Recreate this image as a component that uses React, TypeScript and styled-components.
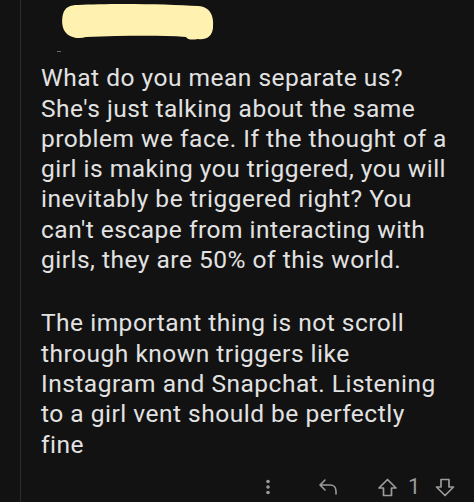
import React from "react";
import styled, { createGlobalStyle } from "styled-components";

const GlobalStyle = createGlobalStyle`
  html, body {
    margin: 0;
    padding: 0;
    background: #121212;
  }
`;

const Page = styled.div`
  display: flex;
  width: 474px;
  height: 502px;
  background: #121212;
  overflow: hidden;
`;

const ThreadLine = styled.div`
  width: 20px;
  flex: none;
  border-right: 1px solid #2c2c2c;
`;

const Comment = styled.div`
  flex: 1;
  display: flex;
  flex-direction: column;
  padding-left: 20px;
`;

const Header = styled.div`
  position: relative;
  height: 65px;
`;

const Redaction = styled.svg`
  position: absolute;
  left: 19px;
  top: 2px;
`;

const Dash = styled.span`
  position: absolute;
  left: 16px;
  top: 51px;
  width: 4px;
  height: 1px;
  background: #6a6a6a;
`;

const Body = styled.div`
  font-family: Roboto, "Liberation Sans", sans-serif;
  font-size: 24.5px;
  letter-spacing: 0.5px;
  line-height: 30.3px;
  color: #e2e2e2;
  white-space: nowrap;
`;

const Paragraph = styled.p`
  margin: 0;
  & + & {
    margin-top: 33px;
  }
`;

const Footer = styled.div`
  display: flex;
  align-items: center;
  height: 30px;
  margin-top: 13px;
  color: #9b9b9b;
  font-family: Roboto, "Liberation Sans", sans-serif;
`;

const Action = styled.span<{ $left: number }>`
  display: flex;
  align-items: center;
  margin-left: ${(p) => p.$left}px;
`;

const Score = styled.span`
  font-size: 22px;
  line-height: 1;
  margin-left: 10px;
  margin-right: 15px;
`;

const first = [
  "What do you mean separate us?",
  "She's just talking about the same",
  "problem we face. If the thought of a",
  "girl is making you triggered, you will",
  "inevitably be triggered right? You",
  "can't escape from interacting with",
  "girls, they are 50% of this world.",
];

const second = [
  "The important thing is not scroll",
  "through known triggers like",
  "Instagram and Snapchat. Listening",
  "to a girl vent should be perfectly",
  "fine",
];

const Lines = ({ lines }: { lines: string[] }) => (
  <Paragraph>
    {lines.map((l, i) => (
      <React.Fragment key={i}>
        {l}
        {i < lines.length - 1 && <br />}
      </React.Fragment>
    ))}
  </Paragraph>
);

const App = () => {
  return (
    <>
      <GlobalStyle />
      <Page>
        <ThreadLine />
        <Comment>
          <Header>
            <Redaction width="156" height="40" viewBox="0 0 156 40">
              <path
                d="M18 3 C 50 1, 110 2, 138 4 C 152 5, 154 16, 153 26 C 152 35, 146 38, 138 37 C 132 38, 128 38, 126 35 C 96 33, 60 34, 26 35 C 20 37, 14 36, 10 34 C 2 30, 1 20, 3 12 C 5 5, 10 3, 18 3 Z"
                fill="#fff2b0"
              />
            </Redaction>
            <Dash />
          </Header>
          <Body>
            <Lines lines={first} />
            <Lines lines={second} />
          </Body>
          <Footer>
            <Action $left={224}>
              <svg width="6" height="16" viewBox="0 0 6 16">
                <circle cx="3" cy="2.5" r="1.8" fill="#9b9b9b" />
                <circle cx="3" cy="8" r="1.8" fill="#9b9b9b" />
                <circle cx="3" cy="13.5" r="1.8" fill="#9b9b9b" />
              </svg>
            </Action>
            <Action $left={47}>
              <svg width="20" height="18" viewBox="0 0 20 18" fill="none">
                <path
                  d="M7 2 L2 7 L7 12 M2 7 H12 C16 7 18 10 18 13 V16"
                  stroke="#9b9b9b"
                  strokeWidth="1.6"
                  strokeLinecap="round"
                  strokeLinejoin="round"
                />
              </svg>
            </Action>
            <Action $left={39}>
              <svg width="21" height="19" viewBox="0 0 21 19" fill="none">
                <path
                  d="M10.5 1.5 L19 10 H14.5 V17.5 H6.5 V10 H2 Z"
                  stroke="#9b9b9b"
                  strokeWidth="1.7"
                  strokeLinejoin="round"
                />
              </svg>
            </Action>
            <Score>1</Score>
            <svg width="20" height="19" viewBox="0 0 20 19" fill="none">
              <path
                d="M10 17.5 L18.5 9 H14 V1.5 H6 V9 H1.5 Z"
                stroke="#9b9b9b"
                strokeWidth="1.7"
                strokeLinejoin="round"
              />
            </svg>
          </Footer>
        </Comment>
      </Page>
    </>
  );
};

export default App;
